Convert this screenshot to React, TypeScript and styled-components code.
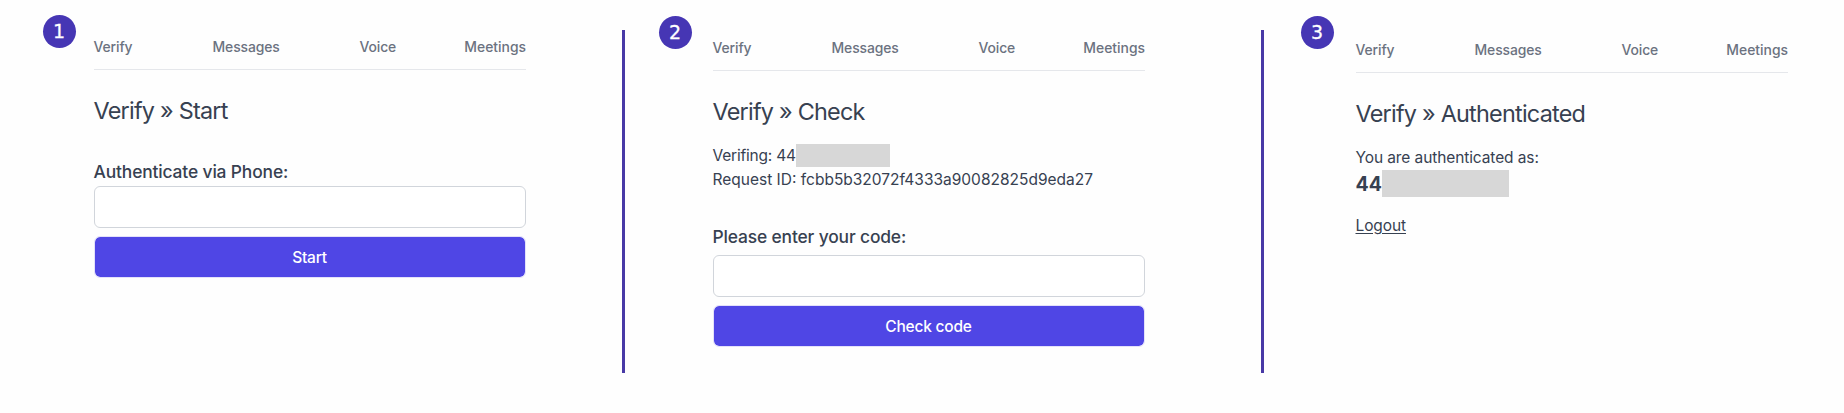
import React from "react";
import styled, { createGlobalStyle } from "styled-components";

const GlobalStyle = createGlobalStyle`
  *, *::before, *::after { box-sizing: border-box; }
  body {
    margin: 0;
    background: #fefefe;
    color: #374151;
    font-family: Inter, "Liberation Sans", sans-serif;
    font-size: 15.5px;
    line-height: 24px;
  }
`;

const Board = styled.main`
  display: grid;
  grid-template-columns: 622px 3px 636px 3px 580px;
  width: 1844px;
  height: 413px;
  overflow: hidden;
`;

const Divider = styled.div`
  height: 343px;
  margin-top: 30px;
  background: #4839a6;
`;

const Panel = styled.section<{ $left: number; $top: number; $gap: number }>`
  display: flex;
  align-items: flex-start;
  gap: ${(p) => p.$gap}px;
  padding: ${(p) => p.$top}px 0 0 ${(p) => p.$left}px;
`;

const Badge = styled.span`
  display: flex;
  align-items: center;
  justify-content: center;
  flex: none;
  width: 33px;
  height: 33px;
  padding-right: 1px;
  border-radius: 50%;
  background: #4636b4;
  color: #fff;
  font: 400 19px/33px "DejaVu Sans", sans-serif;
  -webkit-text-stroke: 0.3px #fff;
`;

const Content = styled.div<{ $offset: number }>`
  display: flex;
  flex-direction: column;
  width: 432px;
  padding-top: ${(p) => p.$offset}px;
`;

const Nav = styled.nav`
  display: grid;
  grid-template-columns: 118.5px 147px 1fr auto;
  height: 35px;
  border-bottom: 1px solid #e5e7eb;
`;

const NavLink = styled.a`
  color: #6b7280;
  font-size: 13.9px;
  font-weight: 500;
  line-height: 24px;
  letter-spacing: -0.1px;

  &:first-child { margin-left: -0.5px; }
  &:last-child { letter-spacing: 0; }
`;

const Title = styled.h1`
  margin: 25px 0 0 -0.5px;
  font-size: 23.4px;
  font-weight: 400;
  line-height: 32px;
  letter-spacing: -0.76px;
`;

const Details = styled.div`
  display: flex;
  flex-direction: column;
  margin: 16px 0 0 -0.5px;
`;

const Line = styled.p<{ $tracking?: number }>`
  display: flex;
  align-items: center;
  margin: 0;
  height: 24px;
  letter-spacing: ${(p) => p.$tracking ?? -0.1}px;
  white-space: nowrap;
`;

const Account = styled.strong`
  display: flex;
  align-items: center;
  height: 28px;
  font-size: 19.5px;
  font-weight: 700;
  line-height: 28px;
`;

const Redacted = styled.span<{ $width: number; $height: number }>`
  width: ${(p) => p.$width}px;
  height: ${(p) => p.$height}px;
  margin-bottom: 2px;
  background: #d7d7d7;
`;

const Form = styled.form<{ $top: number }>`
  display: flex;
  flex-direction: column;
  margin-top: ${(p) => p.$top}px;
`;

const Label = styled.label<{ $space: number }>`
  margin: 0 0 ${(p) => p.$space}px -0.5px;
  font-size: 17.4px;
  font-weight: 500;
  line-height: 28px;
  letter-spacing: -0.14px;
`;

const Input = styled.input`
  height: 42px;
  border: 1px solid #d1d5db;
  border-radius: 6px;
  background: #fff;
  outline: none;
`;

const Button = styled.button`
  height: 42px;
  margin-top: 8px;
  padding: 2px 1px 0 0;
  border: 1px solid #e3e1fa;
  border-radius: 6px;
  background: #4f46e5;
  background-clip: padding-box;
  color: #fff;
  font: 500 15.5px/38px Inter, "Liberation Sans", sans-serif;
  letter-spacing: -0.2px;
`;

const Logout = styled.a`
  align-self: flex-start;
  margin-top: 16px;
  letter-spacing: -0.1px;
  text-decoration: underline;
  text-underline-offset: 2px;
`;

const links = ["Verify", "Messages", "Voice", "Meetings"];

function Step({
  number,
  title,
  left,
  top,
  gap,
  offset,
  children,
}: {
  number: number;
  title: string;
  left: number;
  top: number;
  gap: number;
  offset: number;
  children: React.ReactNode;
}) {
  return (
    <Panel $left={left} $top={top} $gap={gap}>
      <Badge>{number}</Badge>
      <Content $offset={offset}>
        <Nav>
          {links.map((link) => (
            <NavLink key={link}>{link}</NavLink>
          ))}
        </Nav>
        <Title>Verify » {title}</Title>
        {children}
      </Content>
    </Panel>
  );
}

export default function App() {
  return (
    <>
      <GlobalStyle />
      <Board>
        <Step number={1} title="Start" left={43} top={15} gap={18} offset={20}>
          <Form $top={31}>
            <Label htmlFor="phone" $space={0}>Authenticate via Phone:</Label>
            <Input id="phone" />
            <Button type="button">Start</Button>
          </Form>
        </Step>
        <Divider />
        <Step number={2} title="Check" left={34} top={16} gap={21} offset={20}>
          <Details>
            <Line $tracking={-0.2}>
              Verifing: 44
              <Redacted $width={94} $height={23} />
            </Line>
            <Line $tracking={0}>Request ID: fcbb5b32072f4333a90082825d9eda27</Line>
          </Details>
          <Form $top={31}>
            <Label htmlFor="code" $space={4}>Please enter your code:</Label>
            <Input id="code" />
            <Button type="button">Check code</Button>
          </Form>
        </Step>
        <Divider />
        <Step number={3} title="Authenticated" left={37} top={16} gap={22} offset={22}>
          <Details>
            <Line>You are authenticated as:</Line>
            <Account>
              44
              <Redacted $width={127} $height={27} />
            </Account>
            <Logout>Logout</Logout>
          </Details>
        </Step>
      </Board>
    </>
  );
}
